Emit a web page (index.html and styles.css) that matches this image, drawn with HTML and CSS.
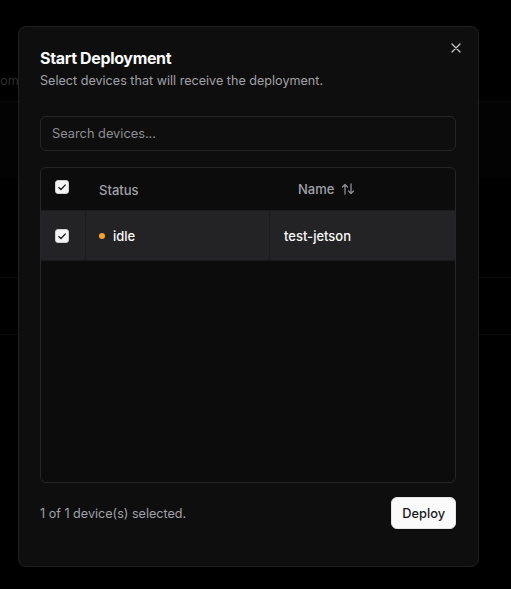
FILE: index.html
```html
<!DOCTYPE html>
<html>
<head>
<meta charset="utf-8">
<link rel="stylesheet" href="styles.css">
</head>
<body>
<div class="page">
  <div class="bg-top"><span class="bg-text">Custom</span></div>
  <div class="bg-band"></div>
  <div class="bg-row"></div>
</div>
<div class="overlay">
  <div class="modal">
    <button class="close" aria-label="Close">
      <svg width="12" height="12" viewBox="0 0 12 12"><path d="M2 2L10 10M10 2L2 10" stroke="#c4c4c8" stroke-width="1.3" stroke-linecap="round"/></svg>
    </button>
    <div class="header">
      <h2 class="title">Start Deployment</h2>
      <p class="desc">Select devices that will receive the deployment.</p>
    </div>
    <div class="search">Search devices...</div>
    <div class="table">
      <div class="thead">
        <div class="cell c-check"><span class="cb"><svg width="10" height="10" viewBox="0 0 10 10"><path d="M1.5 5.2L4 7.5L8.6 2.6" fill="none" stroke="#18181b" stroke-width="1.3"/></svg></span></div>
        <div class="cell c-status">Status</div>
        <div class="cell c-name">Name
          <svg class="sort" width="14" height="14" viewBox="0 0 14 14"><path d="M4 12V2.5M1.5 5L4 2.5L6.5 5M10 2v9.5M7.5 9L10 11.5L12.5 9" fill="none" stroke="#8e8e94" stroke-width="1.3" stroke-linecap="round" stroke-linejoin="round"/></svg>
        </div>
      </div>
      <div class="trow">
        <div class="cell c-check"><span class="cb"><svg width="10" height="10" viewBox="0 0 10 10"><path d="M1.5 5.2L4 7.5L8.6 2.6" fill="none" stroke="#18181b" stroke-width="1.3"/></svg></span></div>
        <div class="cell c-status"><span class="dot"></span>idle</div>
        <div class="cell c-name">test-jetson</div>
      </div>
    </div>
    <div class="footer">
      <span class="count">1 of 1 device(s) selected.</span>
      <button class="deploy">Deploy</button>
    </div>
  </div>
</div>
</body>
</html>
```
FILE: styles.css
```css
* { box-sizing: border-box; }
html, body { margin: 0; padding: 0; }
body {
  width: 511px;
  height: 589px;
  background: #000;
  font-family: Inter, "Noto Sans", sans-serif;
  overflow: hidden;
  position: relative;
}
.page {
  height: 589px;
  display: flex;
  flex-direction: column;
}
.bg-top {
  height: 102px;
  border-bottom: 1px solid #0b0b0b;
  padding: 69px 0 0 0;
}
.bg-text {
  display: inline-block;
  margin-left: -27px;
  font-size: 12.6px;
  color: #2c2c2e;
}
.bg-band {
  height: 76px;
  background: #030303;
}
.bg-row {
  margin-top: 99px;
  height: 58px;
  border-top: 1px solid #0b0b0b;
  border-bottom: 1px solid #0b0b0b;
}
.overlay {
  position: absolute;
  inset: 0;
  padding: 26px 0 0 18px;
}
.modal {
  position: relative;
  width: 461px;
  height: 541px;
  background: #0e0e0e;
  border: 1px solid #202022;
  border-radius: 8px;
  padding: 21px 22px 0 21px;
  display: flex;
  flex-direction: column;
}
.close {
  position: absolute;
  top: 15px;
  right: 16px;
  width: 12px;
  height: 12px;
  padding: 0;
  border: 0;
  background: none;
  display: flex;
}
.header { display: flex; flex-direction: column; gap: 4px; }
.title {
  margin: 0;
  font-size: 16px;
  font-weight: 700;
  color: #fafafa;
  letter-spacing: -0.35px;
  line-height: 20px;
}
.desc {
  margin: 0;
  font-size: 12.6px;
  color: #a1a1a8;
  line-height: 17px;
}
.search {
  margin-top: 27px;
  height: 35px;
  border: 1px solid #262628;
  border-radius: 6px;
  padding: 0 11px;
  display: flex;
  align-items: center;
  font-size: 12.8px;
  color: #8e8e94;
}
.table {
  margin-top: 16px;
  height: 316px;
  border: 1px solid #262628;
  border-radius: 6px;
  overflow: hidden;
  background: #0c0c0c;
}
.thead, .trow {
  display: grid;
  grid-template-columns: 44px 184px 1fr;
}
.thead { height: 43px; border-bottom: 1px solid #1c1c1e; }
.trow { height: 50px; background: #232325; border-bottom: 1px solid #1a1a1c; }
.cell {
  display: flex;
  align-items: center;
  font-size: 13px;
}
.thead .cell { color: #a1a1a8; font-weight: 500; }
.trow .cell { color: #fafafa; font-weight: 500; }
.trow .c-status, .trow .c-name { border-left: 1px solid #1c1c1e; }
.c-check { padding-left: 14px; }
.thead .c-check { padding-bottom: 5px; }
.c-status { padding-left: 13px; }
.thead .c-status { padding-top: 1px; padding-left: 14px; }
.c-name { padding-left: 14px; }
.thead .c-name { padding-left: 29px; gap: 7px; }
.cb {
  width: 14px;
  height: 14px;
  border-radius: 3px;
  background: #f4f4f5;
  border: 1px solid #d0d0d4;
  display: flex;
  align-items: center;
  justify-content: center;
}
.dot {
  width: 6px;
  height: 6px;
  border-radius: 50%;
  background: #f5a524;
  margin-right: 8px;
}
.footer {
  margin-top: 14px;
  display: flex;
  justify-content: space-between;
  align-items: center;
}
.count { font-size: 12.6px; color: #a1a1a8; }
.deploy {
  height: 32px;
  padding: 0 10px;
  border: 1px solid #e4e4e7;
  border-radius: 6px;
  background: #fafafa;
  color: #18181b;
  font-family: Inter, "Noto Sans", sans-serif;
  font-size: 12.8px;
  font-weight: 500;
}
```
